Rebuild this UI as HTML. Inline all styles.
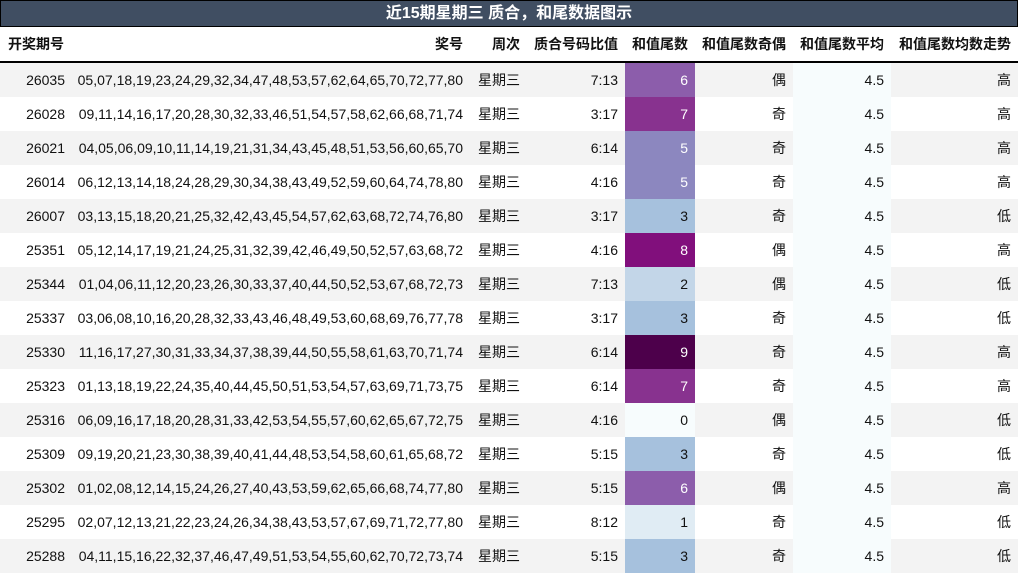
<!DOCTYPE html>
<html><head><meta charset="utf-8"><style>
body{margin:0;width:1018px;height:574px;overflow:hidden;background:#fff;font-family:"Liberation Sans","Noto Sans CJK SC",sans-serif;}
.title{position:absolute;left:0;top:0;width:1016px;height:25px;background:#404e62;border:1px solid #000;color:#fff;font-weight:bold;font-size:16px;text-align:center;line-height:25px;}
table{position:absolute;left:0;top:27px;border-collapse:collapse;font-size:14px;color:#111;}
td,th{padding:0 7px 0 0;text-align:right;white-space:nowrap;height:34px;}
th{height:34px;border-bottom:2px solid #000;font-weight:bold;font-size:14px;}
th:first-child{text-align:left;padding-left:8px;}
tr.g td{background:#f3f3f3;}
td.a{background:#f7fcfd !important;}
td.w{color:#fff;}
</style></head><body>
<div class="title">近15期星期三 质合，和尾数据图示</div>
<table>
<colgroup><col style="width:72px"><col style="width:398px"><col style="width:57px"><col style="width:98px"><col style="width:70px"><col style="width:98px"><col style="width:98px"><col style="width:127px"></colgroup>
<tr><th>开奖期号</th><th>奖号</th><th>周次</th><th>质合号码比值</th><th>和值尾数</th><th>和值尾数奇偶</th><th>和值尾数平均</th><th>和值尾数均数走势</th></tr>
<tr class="g"><td>26035</td><td>05,07,18,19,23,24,29,32,34,47,48,53,57,62,64,65,70,72,77,80</td><td>星期三</td><td>7:13</td><td class="w" style="background:#8c5dab">6</td><td>偶</td><td class="a">4.5</td><td>高</td></tr>
<tr><td>26028</td><td>09,11,14,16,17,20,28,30,32,33,46,51,54,57,58,62,66,68,71,74</td><td>星期三</td><td>3:17</td><td class="w" style="background:#88328f">7</td><td>奇</td><td class="a">4.5</td><td>高</td></tr>
<tr class="g"><td>26021</td><td>04,05,06,09,10,11,14,19,21,31,34,43,45,48,51,53,56,60,65,70</td><td>星期三</td><td>6:14</td><td class="w" style="background:#8c87bf">5</td><td>奇</td><td class="a">4.5</td><td>高</td></tr>
<tr><td>26014</td><td>06,12,13,14,18,24,28,29,30,34,38,43,49,52,59,60,64,74,78,80</td><td>星期三</td><td>4:16</td><td class="w" style="background:#8c87bf">5</td><td>奇</td><td class="a">4.5</td><td>高</td></tr>
<tr class="g"><td>26007</td><td>03,13,15,18,20,21,25,32,42,43,45,54,57,62,63,68,72,74,76,80</td><td>星期三</td><td>3:17</td><td style="background:#a6c1dd">3</td><td>奇</td><td class="a">4.5</td><td>低</td></tr>
<tr><td>25351</td><td>05,12,14,17,19,21,24,25,31,32,39,42,46,49,50,52,57,63,68,72</td><td>星期三</td><td>4:16</td><td class="w" style="background:#810f7c">8</td><td>偶</td><td class="a">4.5</td><td>高</td></tr>
<tr class="g"><td>25344</td><td>01,04,06,11,12,20,23,26,30,33,37,40,44,50,52,53,67,68,72,73</td><td>星期三</td><td>7:13</td><td style="background:#c3d6e8">2</td><td>偶</td><td class="a">4.5</td><td>低</td></tr>
<tr><td>25337</td><td>03,06,08,10,16,20,28,32,33,43,46,48,49,53,60,68,69,76,77,78</td><td>星期三</td><td>3:17</td><td style="background:#a6c1dd">3</td><td>奇</td><td class="a">4.5</td><td>低</td></tr>
<tr class="g"><td>25330</td><td>11,16,17,27,30,31,33,34,37,38,39,44,50,55,58,61,63,70,71,74</td><td>星期三</td><td>6:14</td><td class="w" style="background:#4d004b">9</td><td>奇</td><td class="a">4.5</td><td>高</td></tr>
<tr><td>25323</td><td>01,13,18,19,22,24,35,40,44,45,50,51,53,54,57,63,69,71,73,75</td><td>星期三</td><td>6:14</td><td class="w" style="background:#88328f">7</td><td>奇</td><td class="a">4.5</td><td>高</td></tr>
<tr class="g"><td>25316</td><td>06,09,16,17,18,20,28,31,33,42,53,54,55,57,60,62,65,67,72,75</td><td>星期三</td><td>4:16</td><td style="background:#f7fcfd">0</td><td>偶</td><td class="a">4.5</td><td>低</td></tr>
<tr><td>25309</td><td>09,19,20,21,23,30,38,39,40,41,44,48,53,54,58,60,61,65,68,72</td><td>星期三</td><td>5:15</td><td style="background:#a6c1dd">3</td><td>奇</td><td class="a">4.5</td><td>低</td></tr>
<tr class="g"><td>25302</td><td>01,02,08,12,14,15,24,26,27,40,43,53,59,62,65,66,68,74,77,80</td><td>星期三</td><td>5:15</td><td class="w" style="background:#8c5dab">6</td><td>偶</td><td class="a">4.5</td><td>高</td></tr>
<tr><td>25295</td><td>02,07,12,13,21,22,23,24,26,34,38,43,53,57,67,69,71,72,77,80</td><td>星期三</td><td>8:12</td><td style="background:#e0ecf4">1</td><td>奇</td><td class="a">4.5</td><td>低</td></tr>
<tr class="g"><td>25288</td><td>04,11,15,16,22,32,37,46,47,49,51,53,54,55,60,62,70,72,73,74</td><td>星期三</td><td>5:15</td><td style="background:#a6c1dd">3</td><td>奇</td><td class="a">4.5</td><td>低</td></tr>
</table>
</body></html>
